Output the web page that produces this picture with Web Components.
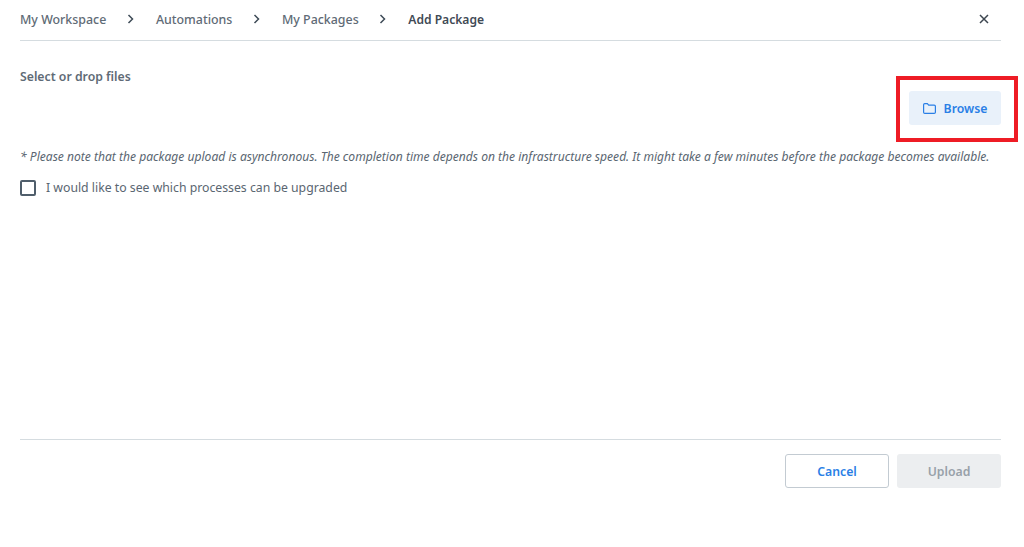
<!DOCTYPE html>
<html>
<head>
<meta charset="utf-8">
<style>
  html, body { margin: 0; background: #fff; }
  body { font-family: "Noto Sans", sans-serif; }
</style>
</head>
<body>
<add-package-page></add-package-page>
<script>
class BreadCrumbs extends HTMLElement {
  constructor() {
    super();
    const items = (this.getAttribute("items") || "").split("|");
    const chevron = `<svg width="8" height="10" viewBox="0 0 8 10"><path d="M1.500 1l4 4-4 4" fill="none" stroke="#3d4a56" stroke-width="1.500"/></svg>`;
    const html = items.map((item, i) => {
      const last = i === items.length - 1;
      return `<span class="${last ? "current" : ""}">${item}</span>` + (last ? "" : chevron);
    }).join("");
    this.attachShadow({ mode: "open" });
    this.shadowRoot.innerHTML = `
      <style>
        :host { display: flex; align-items: center; gap: 20.8px; font-size: 12.4px; font-weight: 500; color: #5f6b76; }
        .current { color: #3f4a55; font-weight: 600; font-size: 12.1px; }
      </style>
      ${html}`;
  }
}
customElements.define("bread-crumbs", BreadCrumbs);

class UiButton extends HTMLElement {
  constructor() {
    super();
    const template = document.createElement("template");
    template.innerHTML = `
      <style>
        :host { display: inline-flex; align-items: center; justify-content: center; box-sizing: border-box; height: 34px; border-radius: 3px; font-size: 12.25px; font-weight: 600; }
        :host([kind="soft"]) { width: 92px; background: #e9f1fa; color: #2a7fe6; }
        :host([kind="outline"]) { width: 104px; background: #fff; color: #2a7fe6; border: 1px solid #c3cbd2; }
        :host([kind="disabled"]) { width: 104px; background: #eceef0; color: #98a1a9; }
      </style>
      <slot></slot>`;
    this.attachShadow({ mode: "open" });
    this.shadowRoot.appendChild(template.content.cloneNode(true));
  }
}
customElements.define("ui-button", UiButton);

class CheckField extends HTMLElement {
  constructor() {
    super();
    this.attachShadow({ mode: "open" });
    this.shadowRoot.innerHTML = `
      <style>
        :host { display: flex; align-items: center; gap: 10px; font-size: 12.25px; color: #5a6671; }
        .box { box-sizing: border-box; width: 16px; height: 16px; border: 2px solid #4f5e6b; border-radius: 2px; }
      </style>
      <div class="box"></div><slot></slot>`;
  }
}
customElements.define("check-field", CheckField);

class AddPackagePage extends HTMLElement {
  constructor() {
    super();
    this.attachShadow({ mode: "open" });
    this.shadowRoot.innerHTML = `
      <style>
        :host { display: flex; flex-direction: column; position: relative; box-sizing: border-box; width: 1024px; height: 547px; padding: 0 23px 0 20px; overflow: hidden; }
        header { display: flex; align-items: center; justify-content: space-between; box-sizing: border-box; height: 41px; padding-bottom: 2px; border-bottom: 1px solid #d5dce0; }
        .close { display: flex; margin-right: 12px; margin-top: -1px; }
        .files { display: flex; justify-content: space-between; height: 84px; padding-top: 26px; box-sizing: border-box; }
        .label { font-size: 12.25px; font-weight: 600; color: #5f6b76; line-height: 19px; }
        .files ui-button { margin-top: 24px; }
        svg.folder { margin-right: 8px; }
        .note { margin-top: 23px; font-size: 12.08px; font-style: italic; color: #5a6671; line-height: 18px; white-space: nowrap; }
        check-field { margin-top: 13px; }
        .spacer { flex: 1; }
        footer { display: flex; justify-content: flex-end; gap: 8px; border-top: 1px solid #d5dce0; padding-top: 14px; height: 108px; box-sizing: border-box; }
        .mark { position: absolute; left: 896px; top: 76px; width: 122px; height: 66px; box-sizing: border-box; border: 4px solid #ee1c25; }
      </style>
      <header>
        <bread-crumbs items="My Workspace|Automations|My Packages|Add Package"></bread-crumbs>
        <span class="close"><svg width="10" height="10" viewBox="0 0 10 10"><path d="M1 1l8 8M9 1l-8 8" stroke="#3d4650" stroke-width="1.500" fill="none"/></svg></span>
      </header>
      <div class="files">
        <span class="label">Select or drop files</span>
        <ui-button kind="soft"><svg class="folder" width="13" height="11" viewBox="0 0 13 11"><path d="M.6 1.800C.6 1.100 1.100.6 1.800.6h2.500l1.400 1.500h5.500c.7 0 1.200.5 1.200 1.200v5.900c0 .7-.5 1.200-1.200 1.200H1.800C1.100 10.400.6 9.900.6 9.200z" fill="none" stroke="#2a7fe6" stroke-width="1.200"/></svg>Browse</ui-button>
      </div>
      <div class="note">* Please note that the package upload is asynchronous. The completion time depends on the infrastructure speed. It might take a few minutes before the package becomes available.</div>
      <check-field>I would like to see which processes can be upgraded</check-field>
      <div class="spacer"></div>
      <footer>
        <ui-button kind="outline">Cancel</ui-button>
        <ui-button kind="disabled">Upload</ui-button>
      </footer>
      <div class="mark"></div>`;
  }
}
customElements.define("add-package-page", AddPackagePage);
</script>
</body>
</html>
